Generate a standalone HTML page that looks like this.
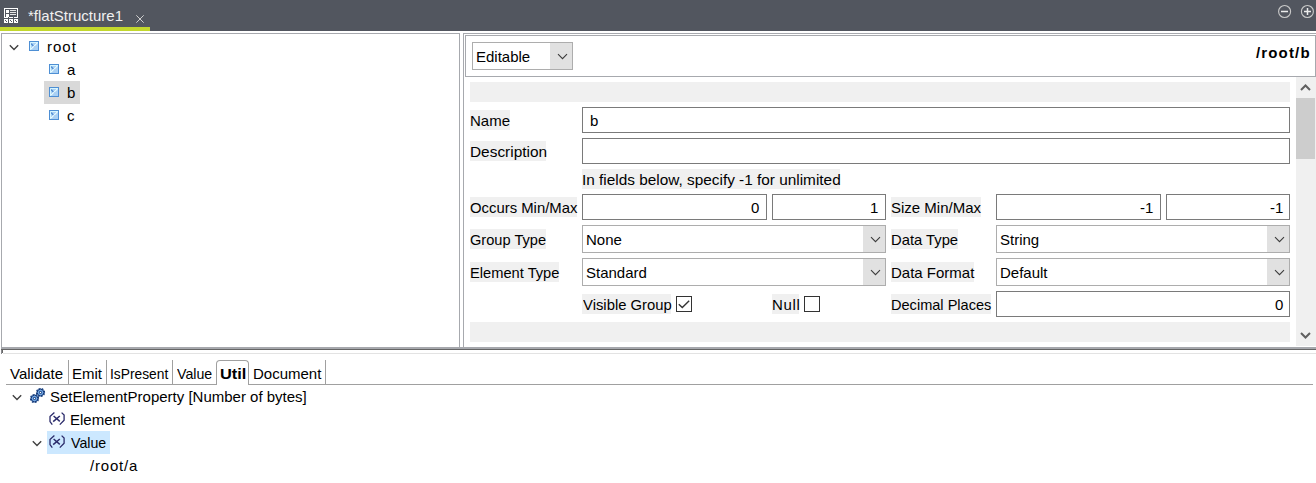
<!DOCTYPE html>
<html><head><meta charset="utf-8">
<style>
*{margin:0;padding:0;box-sizing:border-box}
html,body{width:1316px;height:483px;overflow:hidden;background:#fff;font-family:"Liberation Sans",sans-serif;font-size:15px;color:#000;position:relative}
div,span,svg{position:absolute}
.t{white-space:nowrap;line-height:17px;transform-origin:0 0}
.r{position:absolute}
.lbl{background:#f0f0f0;height:20px}
.tb{border:1px solid #7a7a7a;background:#fff;height:26px}
.cb{border:1px solid #adadad;background:#fff;height:28px}
.cbb{background:#e1e1e1;top:0;bottom:0;width:22px;right:0}
</style></head><body>
<!-- top tab bar -->
<div class="r" style="left:0;top:0;width:1316px;height:31px;background:#52565f"></div>
<div class="r" style="left:0;top:27px;width:150px;height:4px;background:#c3d82d"></div>
<svg style="left:4px;top:8px" width="14" height="15" viewBox="0 0 14 15" shape-rendering="crispEdges">
 <g fill="#fff">
  <rect x="0" y="0" width="14" height="1"/>
  <rect x="0" y="0" width="1" height="10"/>
  <rect x="13" y="0" width="1" height="10"/>
  <rect x="0" y="9" width="4" height="1"/>
  <rect x="5" y="9" width="4" height="1"/>
  <rect x="10" y="9" width="4" height="1"/>
  <rect x="2" y="2" width="3" height="3"/>
  <rect x="2" y="6" width="3" height="3"/>
  <rect x="0" y="11" width="4" height="4"/>
  <rect x="5" y="11" width="4" height="4"/>
  <rect x="10" y="11" width="4" height="4"/>
 </g>
 <g fill="#e6e6e6">
  <rect x="6" y="2" width="6" height="1"/>
  <rect x="6" y="4" width="6" height="1"/>
  <rect x="6" y="6" width="6" height="1"/>
 </g>
 <g fill="#52565f">
  <rect x="1" y="12" width="1" height="1"/><rect x="2" y="13" width="1" height="1"/>
  <rect x="6" y="12" width="1" height="1"/><rect x="7" y="13" width="1" height="1"/>
  <rect x="11" y="12" width="1" height="1"/><rect x="12" y="13" width="1" height="1"/>
  
 </g>
</svg>
<div class="t" style="left:28px;top:7px;color:#f0f0f0">*flatStructure1</div>
<svg style="left:135px;top:14px" width="10" height="10" viewBox="0 0 10 10"><path d="M1.3 1.3L8.7 8.7M8.7 1.3L1.3 8.7" stroke="#cfcfcf" stroke-width="1"/></svg>
<svg style="left:1276px;top:4px" width="40" height="16" viewBox="0 0 40 16">
 <g fill="none" stroke="#c9c9c9" stroke-width="1.1">
  <circle cx="8.6" cy="7.5" r="6"/>
  <circle cx="31.4" cy="7.5" r="6"/>
 </g>
 <g fill="none" stroke="#ececec" stroke-width="1.5">
  <path d="M5 7.5H12"/>
  <path d="M28 7.5H35M31.5 4.1V10.9"/>
 </g>
</svg>

<!-- left tree panel -->
<div class="r" style="left:1px;top:33px;width:459px;height:315px;border:1px solid #a7a9ae;border-bottom:none"></div>
<!-- right panel outer -->
<div class="r" style="left:463px;top:33px;width:853px;height:315px;border-left:1px solid #a7a9ae;border-top:1px solid #a7a9ae"></div>
<!-- header box -->
<div class="r" style="left:465px;top:35px;width:851px;height:42px;border:1px solid #a7a9ae"></div>


<!-- tree -->
<svg style="left:9px;top:44px" width="10" height="7" viewBox="0 0 10 7"><path d="M0.8 1.2L5 5.4L9.2 1.2" fill="none" stroke="#404040" stroke-width="1.4"/></svg>
<svg style="left:29px;top:41px" width="10" height="10" viewBox="0 0 10 10"><rect x="0.5" y="0.5" width="9" height="9" fill="#a9d0f4" stroke="#4e8fd4"/><path d="M1.5 9V1.5H9" fill="none" stroke="#d6f6ff" stroke-width="1"/><path d="M2.2 2.6L5.2 6" stroke="#3f7fcc" stroke-width="1.1"/><path d="M2 8.2L8.4 1.8" stroke="#ecfdff" stroke-width="1.1"/></svg>
<div class="t" style="left:47px;top:38px;letter-spacing:1px">root</div>
<svg style="left:49px;top:64px" width="10" height="10" viewBox="0 0 10 10"><rect x="0.5" y="0.5" width="9" height="9" fill="#a9d0f4" stroke="#4e8fd4"/><path d="M1.5 9V1.5H9" fill="none" stroke="#d6f6ff" stroke-width="1"/><path d="M2.2 2.6L5.2 6" stroke="#3f7fcc" stroke-width="1.1"/><path d="M2 8.2L8.4 1.8" stroke="#ecfdff" stroke-width="1.1"/></svg>
<div class="t" style="left:67px;top:61px">a</div>
<div class="r" style="left:44px;top:81px;width:36px;height:23px;background:#d9d9d9"></div>
<svg style="left:49px;top:87px" width="10" height="10" viewBox="0 0 10 10"><rect x="0.5" y="0.5" width="9" height="9" fill="#a9d0f4" stroke="#4e8fd4"/><path d="M1.5 9V1.5H9" fill="none" stroke="#d6f6ff" stroke-width="1"/><path d="M2.2 2.6L5.2 6" stroke="#3f7fcc" stroke-width="1.1"/><path d="M2 8.2L8.4 1.8" stroke="#ecfdff" stroke-width="1.1"/></svg>
<div class="t" style="left:67px;top:84px">b</div>
<svg style="left:49px;top:110px" width="10" height="10" viewBox="0 0 10 10"><rect x="0.5" y="0.5" width="9" height="9" fill="#a9d0f4" stroke="#4e8fd4"/><path d="M1.5 9V1.5H9" fill="none" stroke="#d6f6ff" stroke-width="1"/><path d="M2.2 2.6L5.2 6" stroke="#3f7fcc" stroke-width="1.1"/><path d="M2 8.2L8.4 1.8" stroke="#ecfdff" stroke-width="1.1"/></svg>
<div class="t" style="left:67px;top:107px">c</div>

<!-- header -->
<div class="cb" style="left:472px;top:42px;width:101px"><div class="cbb"></div></div>
<svg style="left:557px;top:53px" width="11" height="7" viewBox="0 0 11 7"><path d="M1 1.2L5.5 5.7L10 1.2" fill="none" stroke="#3c3c3c" stroke-width="1.1"/></svg>
<div class="t" style="left:476px;top:48px">Editable</div>
<div class="t" style="left:1256px;top:44px;font-weight:bold;letter-spacing:1.15px">/root/b</div>

<!-- bands -->
<div class="r" style="left:470px;top:82px;width:820px;height:20px;background:#f0f0f0"></div>
<div class="r" style="left:470px;top:322px;width:820px;height:20px;background:#f0f0f0"></div>

<!-- labels -->
<div class="r lbl" style="left:470px;top:110px;width:40px"></div>
<div class="t" style="left:470px;top:112px">Name</div>
<div class="r tb" style="left:582px;top:107px;width:708px"></div>
<div class="t" style="left:590px;top:112px">b</div>

<div class="r lbl" style="left:470px;top:141px;width:76px"></div>
<div class="t" style="left:470px;top:143px;transform:scaleX(1.027)">Description</div>
<div class="r tb" style="left:582px;top:138px;width:708px"></div>

<div class="r lbl" style="left:582px;top:169px;width:258px"></div>
<div class="t" style="left:582px;top:171px;transform:scaleX(1.024)">In fields below, specify -1 for unlimited</div>

<div class="r lbl" style="left:470px;top:197px;width:107px"></div>
<div class="t" style="left:470px;top:199px;transform:scaleX(0.991)">Occurs Min/Max</div>
<div class="r tb" style="left:582px;top:194px;width:185px"></div>
<div class="t" style="left:751px;top:199px">0</div>
<div class="r tb" style="left:772px;top:194px;width:114px"></div>
<div class="t" style="left:870px;top:199px">1</div>

<div class="r lbl" style="left:891px;top:197px;width:90px"></div>
<div class="t" style="left:891px;top:199px">Size Min/Max</div>
<div class="r tb" style="left:996px;top:194px;width:165px"></div>
<div class="t" style="left:1140px;top:199px">-1</div>
<div class="r tb" style="left:1166px;top:194px;width:124px"></div>
<div class="t" style="left:1270px;top:199px">-1</div>

<div class="r lbl" style="left:470px;top:229px;width:76px"></div>
<div class="t" style="left:470px;top:231px;transform:scaleX(0.974)">Group Type</div>
<div class="cb" style="left:582px;top:225px;width:304px"><div class="cbb"></div></div>
<svg style="left:870px;top:236px" width="11" height="7" viewBox="0 0 11 7"><path d="M1 1.2L5.5 5.7L10 1.2" fill="none" stroke="#3c3c3c" stroke-width="1.1"/></svg>
<div class="t" style="left:586px;top:231px">None</div>

<div class="r lbl" style="left:891px;top:229px;width:67px"></div>
<div class="t" style="left:891px;top:231px;transform:scaleX(0.985)">Data Type</div>
<div class="cb" style="left:996px;top:225px;width:294px"><div class="cbb"></div></div>
<svg style="left:1274px;top:236px" width="11" height="7" viewBox="0 0 11 7"><path d="M1 1.2L5.5 5.7L10 1.2" fill="none" stroke="#3c3c3c" stroke-width="1.1"/></svg>
<div class="t" style="left:1000px;top:231px">String</div>

<div class="r lbl" style="left:470px;top:262px;width:89px"></div>
<div class="t" style="left:470px;top:264px;transform:scaleX(0.978)">Element Type</div>
<div class="cb" style="left:582px;top:258px;width:304px"><div class="cbb"></div></div>
<svg style="left:870px;top:269px" width="11" height="7" viewBox="0 0 11 7"><path d="M1 1.2L5.5 5.7L10 1.2" fill="none" stroke="#3c3c3c" stroke-width="1.1"/></svg>
<div class="t" style="left:586px;top:264px">Standard</div>

<div class="r lbl" style="left:891px;top:262px;width:83px"></div>
<div class="t" style="left:891px;top:264px">Data Format</div>
<div class="cb" style="left:996px;top:258px;width:294px"><div class="cbb"></div></div>
<svg style="left:1274px;top:269px" width="11" height="7" viewBox="0 0 11 7"><path d="M1 1.2L5.5 5.7L10 1.2" fill="none" stroke="#3c3c3c" stroke-width="1.1"/></svg>
<div class="t" style="left:1000px;top:264px">Default</div>

<div class="r lbl" style="left:582px;top:294px;width:89px"></div>
<div class="t" style="left:583px;top:296px;transform:scaleX(0.989)">Visible Group</div>
<svg style="left:676px;top:296px" width="16" height="16" viewBox="0 0 16 16"><rect x="0.5" y="0.5" width="15" height="15" fill="#fff" stroke="#333"/><path d="M2.8 8.2L6.3 11.6L13.2 4.8" fill="none" stroke="#333" stroke-width="1.4"/></svg>

<div class="r lbl" style="left:772px;top:294px;width:27px"></div>
<div class="t" style="left:772px;top:296px;letter-spacing:0.7px">Null</div>
<svg style="left:804px;top:296px" width="16" height="16" viewBox="0 0 16 16"><rect x="0.5" y="0.5" width="15" height="15" fill="#fff" stroke="#333"/></svg>

<div class="r lbl" style="left:891px;top:294px;width:100px"></div>
<div class="t" style="left:891px;top:296px;transform:scaleX(0.971)">Decimal Places</div>
<div class="r tb" style="left:996px;top:291px;width:294px"></div>
<div class="t" style="left:1275px;top:296px">0</div>

<!-- scrollbar -->
<div class="r" style="left:1296px;top:77px;width:20px;height:269px;background:#f0f0f0"></div>
<div class="r" style="left:1296px;top:98px;width:19px;height:61px;background:#cdcdcd"></div>
<svg style="left:1300px;top:83px" width="11" height="9" viewBox="0 0 11 9"><path d="M1 7L5.5 2.5L10 7" fill="none" stroke="#606060" stroke-width="2"/></svg>
<svg style="left:1300px;top:331px" width="11" height="9" viewBox="0 0 11 9"><path d="M1 2L5.5 6.5L10 2" fill="none" stroke="#606060" stroke-width="2"/></svg>

<!-- bottom sash lines -->
<div class="r" style="left:1px;top:347px;width:1315px;height:2px;background:#a6a8ad"></div>
<div class="r" style="left:1px;top:349px;width:1315px;height:1px;background:#666"></div>
<div class="r" style="left:1px;top:350px;width:1px;height:4px;background:#8a8b8f"></div><div class="r" style="left:2px;top:350px;width:1px;height:3px;background:#666"></div>
<div class="r" style="left:3px;top:353px;width:1313px;height:1px;background:#e3e3e3"></div>

<!-- bottom tabs -->
<div class="r" style="left:6px;top:384px;width:210px;height:1px;background:#a0a0a0"></div>
<div class="r" style="left:249px;top:384px;width:1064px;height:1px;background:#a0a0a0"></div>
<div class="r" style="left:68px;top:360px;width:1px;height:24px;background:#a0a0a0"></div>
<div class="r" style="left:106px;top:360px;width:1px;height:24px;background:#a0a0a0"></div>
<div class="r" style="left:172px;top:360px;width:1px;height:24px;background:#a0a0a0"></div>
<div class="r" style="left:325px;top:360px;width:1px;height:24px;background:#a0a0a0"></div>
<div class="r" style="left:216px;top:360px;width:33px;height:25px;border:1px solid #a0a0a0;border-bottom:none;border-radius:4px 4px 0 0;background:#fff"></div>
<div class="t" style="left:10px;top:365px">Validate</div>
<div class="t" style="left:72px;top:365px">Emit</div>
<div class="t" style="left:110.1px;top:365px;transform:scaleX(0.919)">IsPresent</div>
<div class="t" style="left:177px;top:365px;transform:scaleX(0.946)">Value</div>
<div class="t" style="left:219.9px;top:365px;font-weight:bold;transform:scaleX(1.091)">Util</div>
<div class="t" style="left:253px;top:365px">Document</div>

<!-- bottom tree -->
<svg style="left:12px;top:394px" width="10" height="7" viewBox="0 0 10 7"><path d="M0.8 1.2L5 5.4L9.2 1.2" fill="none" stroke="#404040" stroke-width="1.4"/></svg>
<svg style="left:29px;top:387px" width="17" height="17" viewBox="0 0 17 17"><circle cx="5.5" cy="11.5" r="3.9" fill="none" stroke="#12397a" stroke-width="1.4" stroke-dasharray="1.9 1.16" transform="rotate(11 5.5 11.5)"/>
  <circle cx="5.5" cy="11.5" r="3.3" fill="#72a6e2" stroke="#12397a" stroke-width="1"/>
  <circle cx="5.5" cy="11.5" r="1.4" fill="#12397a"/>
  <circle cx="5.5" cy="11.5" r="0.75" fill="#fff"/><circle cx="11.5" cy="5.5" r="3.9" fill="none" stroke="#12397a" stroke-width="1.4" stroke-dasharray="1.9 1.16" transform="rotate(11 11.5 5.5)"/>
  <circle cx="11.5" cy="5.5" r="3.3" fill="#72a6e2" stroke="#12397a" stroke-width="1"/>
  <circle cx="11.5" cy="5.5" r="1.4" fill="#12397a"/>
  <circle cx="11.5" cy="5.5" r="0.75" fill="#fff"/></svg>
<div class="t" style="left:50px;top:388px">SetElementProperty [Number of bytes]</div>
<svg style="left:48px;top:412px" width="18" height="14" viewBox="0 0 18 14"><g fill="none" stroke="#2b2b6b" stroke-width="1.3" stroke-linejoin="round"><path d="M6.4 0.6L2 4.4V9.6L4.3 12.6"/><path d="M13.6 0.6L16.1 3V8.2L11.8 12.6"/></g><g fill="none" stroke="#2b2b6b" stroke-width="1.5"><path d="M5.6 4L11.8 9.4"/><path d="M11.8 4L5.2 9.6"/></g></svg>
<div class="t" style="left:70px;top:411px">Element</div>
<div class="r" style="left:47px;top:431px;width:63px;height:23px;background:#cce8ff"></div>
<svg style="left:32px;top:440px" width="10" height="7" viewBox="0 0 10 7"><path d="M0.8 1.2L5 5.4L9.2 1.2" fill="none" stroke="#404040" stroke-width="1.4"/></svg>
<svg style="left:48px;top:435px" width="18" height="14" viewBox="0 0 18 14"><g fill="none" stroke="#2b2b6b" stroke-width="1.3" stroke-linejoin="round"><path d="M6.4 0.6L2 4.4V9.6L4.3 12.6"/><path d="M13.6 0.6L16.1 3V8.2L11.8 12.6"/></g><g fill="none" stroke="#2b2b6b" stroke-width="1.5"><path d="M5.6 4L11.8 9.4"/><path d="M11.8 4L5.2 9.6"/></g></svg>
<div class="t" style="left:71px;top:434px;transform:scaleX(0.946)">Value</div>
<div class="t" style="left:90px;top:457px;letter-spacing:0.8px">/root/a</div>

</body></html>
